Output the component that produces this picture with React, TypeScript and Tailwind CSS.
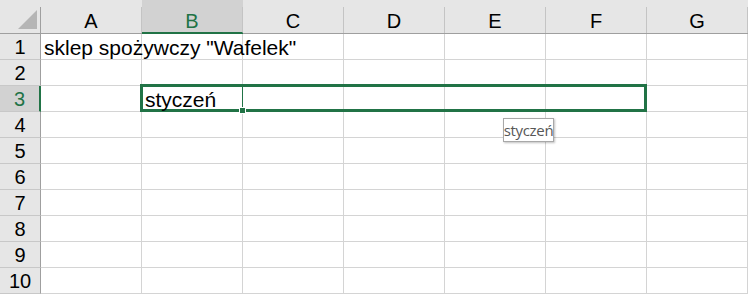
import React from 'react'

const cols = ['A', 'B', 'C', 'D', 'E', 'F', 'G']
const rows = [1, 2, 3, 4, 5, 6, 7, 8, 9, 10]

const font = { fontFamily: '"Liberation Sans", Arial, sans-serif' }

function cellText(r: number, c: string) {
  if (r === 1 && c === 'A') return 'sklep spożywczy "Wafelek"'
  if (r === 3 && c === 'B') return 'styczeń'
  return ''
}

export default function App() {
  return (
    <div
      className="relative w-[748px] h-[295px] bg-white overflow-hidden text-black"
      style={font}
    >
      <div className="grid grid-cols-[41px_repeat(7,101px)] grid-rows-[34px_repeat(10,26px)] text-[20px] leading-none">
        {/* corner */}
        <div className="flex flex-col bg-[#e6e6e6] border-b border-[#9f9f9f]">
          <div className="h-[7px]" />
          <div className="flex-1 border-r border-[#9f9f9f] relative">
            <svg className="absolute left-[18px] top-[3px]" width="19" height="19" viewBox="0 0 19 19">
              <polygon points="19,0 19,19 0,19" fill="#b5b5b5" />
            </svg>
          </div>
        </div>
        {cols.map(c => (
          <div
            key={c}
            className={`flex flex-col border-b ${c === 'B' ? 'bg-[#d2d2d2] border-[#217346]' : 'bg-[#e6e6e6] border-[#9f9f9f]'}`}
          >
            <div className="h-[7px]" />
            <div
              className={`flex-1 flex items-center justify-center pt-[2px] border-r border-[#c4c4c4] ${c === 'B' ? 'text-[#217346] border-b border-b-[#217346]' : ''}`}
            >
              {c}
            </div>
          </div>
        ))}

        {rows.map(r => (
          <React.Fragment key={r}>
            <div
              className={`flex items-center justify-center border-b border-[#c8c8c8] ${r === 3 ? 'bg-[#d2d2d2] text-[#217346] border-r-2 border-r-[#217346]' : 'bg-[#e6e6e6] border-r border-r-[#9f9f9f]'}`}
            >
              {r}
            </div>
            {cols.map(c => (
              <div
                key={c}
                className="flex items-center border-r border-b border-[#d4d4d4] pl-[3px] pt-[1px] whitespace-nowrap overflow-visible text-[21px]"
              >
                <span className="relative z-10">{cellText(r, c)}</span>
              </div>
            ))}
          </React.Fragment>
        ))}
      </div>

      {/* selection B3:F3 */}
      <div className="absolute left-[140px] top-[84px] w-[507px] h-[28px] border-[3px] border-[#217346]" />
      <div className="absolute left-[242px] top-[86px] w-px h-[24px] bg-[#217346]" />
      <div className="absolute left-[240px] top-[108px] w-[5px] h-[5px] bg-[#217346] outline outline-1 outline-white" />

      {/* tooltip */}
      <div
        className="absolute left-[503px] top-[118px] w-[51px] h-[24px] bg-white border border-[#a8a8a8] shadow-[1px_1px_2px_rgba(0,0,0,0.25)] flex items-center justify-center text-[15px] text-[#575757] tracking-[-0.3px]"
        style={{ fontFamily: '"Open Sans", "Noto Sans", sans-serif' }}
      >
        styczeń
      </div>
    </div>
  )
}
